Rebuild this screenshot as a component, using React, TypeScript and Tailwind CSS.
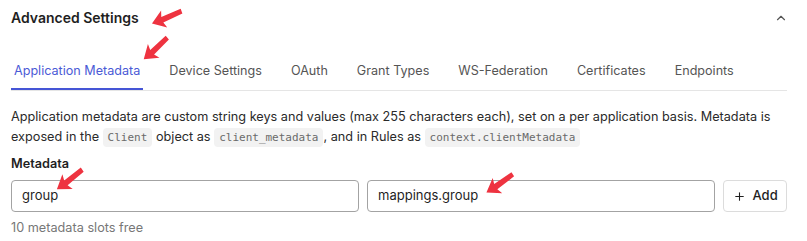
import { ChevronUp, Plus } from "lucide-react";

const tabs = [
	"Application Metadata",
	"Device Settings",
	"OAuth",
	"Grant Types",
	"WS-Federation",
	"Certificates",
	"Endpoints",
];

function Code({ children }: { children: string }) {
	return (
		<code className="rounded-[4px] bg-[#f2f2f2] px-[5px] py-[3px] font-['DejaVu_Sans_Mono',monospace] text-[11px] text-[#6a6a6a]">
			{children}
		</code>
	);
}

function Arrow({ className, rotate }: { className: string; rotate: number }) {
	return (
		<svg
			className={`pointer-events-none absolute ${className}`}
			width="34"
			height="24"
			viewBox="0 0 34 24"
			style={{ transform: `rotate(${rotate}deg)` }}
		>
			<path d="M1 12 L14 3 L12 9 L33 8 L33 13 L12 15 L14 21 Z" fill="#ee3340" />
		</svg>
	);
}

export default function App() {
	return (
		<div className="relative h-[241px] w-[807px] overflow-hidden bg-white pl-[11px] pr-[20px] font-['Inter',sans-serif] text-[#1f1f1f]">
			<div className="flex h-[34px] items-center justify-between pt-[1px]">
				<h2 className="text-[14px] font-semibold">Advanced Settings</h2>
				<ChevronUp className="mr-[-1px] h-[14px] w-[14px] text-[#555]" strokeWidth={2} />
			</div>

			<div className="mt-[27px] flex border-b border-[#e5e5e5] text-[12.6px] text-[#555]">
				{tabs.map((t, i) => (
					<div
						key={t}
						className={
							i === 0
								? "mr-[23px] border-b-2 border-[#4555d6] px-[3px] pb-[8px] leading-[19px] text-[#4b5bd6]"
								: "mr-[23px] border-b-2 border-transparent px-[3px] pb-[8px] leading-[19px]"
						}
					>
						{t}
					</div>
				))}
			</div>

			<p className="mt-[16px] text-[12.7px] leading-[20px] text-[#2a2a2a]">
				Application metadata are custom string keys and values (max 255 characters each), set on a per
				application basis. Metadata is exposed in the <Code>Client</Code> object as{" "}
				<Code>client_metadata</Code>, and in Rules as <Code>context.clientMetadata</Code>
			</p>

			<div className="mt-[6px] text-[12.7px] font-semibold leading-[19px]">Metadata</div>

			<div className="mt-[7px] flex gap-[8px]">
				<div className="flex h-[32px] w-[349px] items-center rounded-[4px] border border-[#a3a3a3] px-[10px] text-[13px]">
					group
				</div>
				<div className="flex h-[32px] w-[349px] items-center rounded-[4px] border border-[#a3a3a3] px-[10px] text-[13px]">
					mappings.group
				</div>
				<button className="flex h-[32px] w-[64px] items-center justify-center gap-[7px] rounded-[4px] border border-[#dcdcdc] text-[13px] font-medium">
					<Plus className="h-[13px] w-[13px]" strokeWidth={2} />
					Add
				</button>
			</div>

			<div className="mt-[7px] text-[12.7px] leading-[18px] text-[#777]">10 metadata slots free</div>

			<Arrow className="left-[150px] top-[6px]" rotate={-20} />
			<Arrow className="left-[139px] top-[37px]" rotate={-40} />
			<Arrow className="left-[53px] top-[168px]" rotate={-35} />
			<Arrow className="left-[483px] top-[172px]" rotate={-32} />
		</div>
	);
}
